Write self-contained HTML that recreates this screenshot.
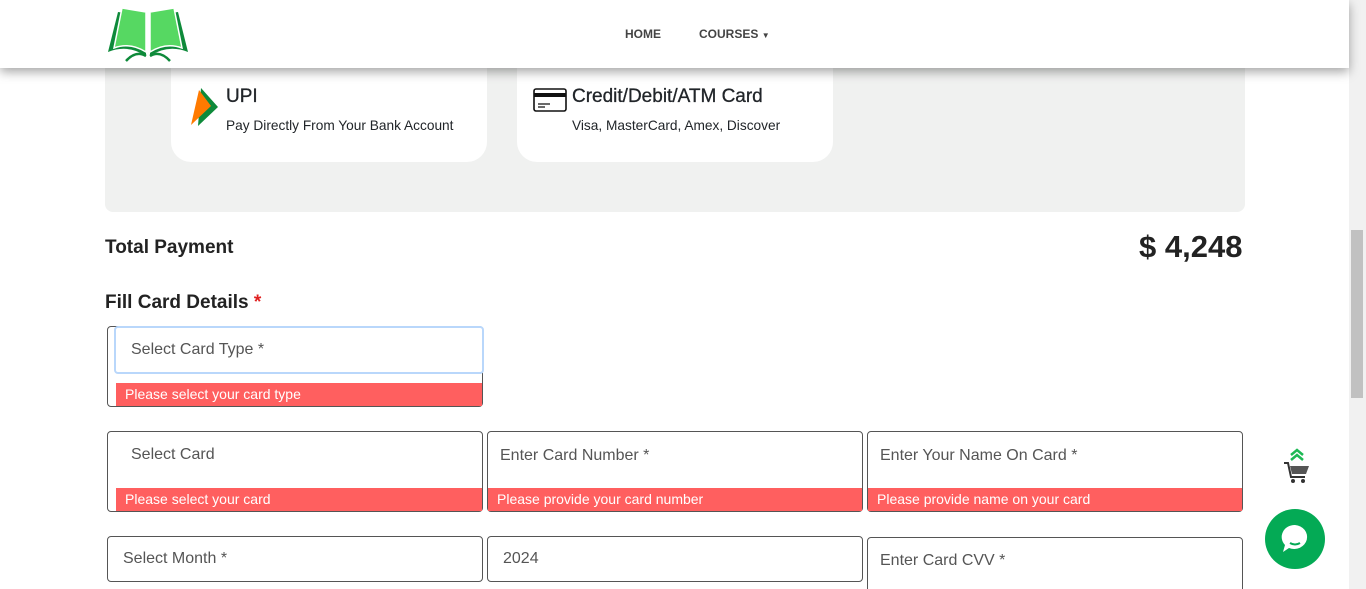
<!DOCTYPE html>
<html><head><style>
*{box-sizing:border-box;margin:0;padding:0}
html,body{width:1366px;height:589px;overflow:hidden}
body{background:#fff;font-family:"Liberation Sans",Arial,sans-serif;position:relative;color:#212529}
.abs{position:absolute}
.hdr{left:0;top:0;width:1349px;height:68px;background:#fff;box-shadow:0 4px 10px rgba(0,0,0,.35);z-index:5}
.nav{font-size:12px;font-weight:bold;color:#444;top:27px}
.panel{left:105px;top:40px;width:1140px;height:172px;background:#f0f1f0;border-radius:8px}
.card{background:#fff;border-radius:20px;top:40px;height:122px}
.box{border:1px solid #555;border-radius:4px;background:#fff}
.err{background:#ff5f5f;color:#fff;font-size:14px;padding-left:9px;line-height:23px;height:23px}
.ph{font-size:16px;color:#555}
.sb{left:1349px;top:0;width:17px;height:589px;background:#f1f1f1}
</style></head><body>
<div class="abs hdr">
<svg class="abs" style="left:106px;top:6px" width="84" height="56" viewBox="0 0 84 56">
<path d="M2 46 L12 6 L40 10 L40 50 Q22 38 2 46Z" fill="#0e8a3a"/>
<path d="M82 46 L72 6 L44 10 L44 50 Q62 38 82 46Z" fill="#0e8a3a"/>
<path d="M8 42 L16 2 L40 6 L40 46 Q24 36 8 42Z" fill="#56d862" stroke="#fff" stroke-width="1.5"/>
<path d="M76 42 L68 2 L44 6 L44 46 Q60 36 76 42Z" fill="#56d862" stroke="#fff" stroke-width="1.5"/>
<path d="M20 55 Q30 44 40 50 M64 55 Q54 44 44 50" stroke="#0e8a3a" stroke-width="2.5" fill="none"/>
</svg>
<div class="abs nav" style="left:625px">HOME</div>
<div class="abs nav" style="left:699px">COURSES <span style="font-size:8px">▼</span></div>
</div>
<div class="abs panel"></div>
<div class="abs card" style="left:171px;width:316px"></div>
<div class="abs card" style="left:517px;width:316px"></div>
<svg class="abs" style="left:191px;top:88px" width="28" height="38" viewBox="0 0 28 38"><path d="M10 0 L27 19 L7 38Z" fill="#0e8a3a"/><path d="M8 2 L20 18 L0 37Z" fill="#ff7a00"/></svg>
<div class="abs" style="left:226px;top:86px;font-size:19px;font-weight:500;-webkit-text-stroke:0.3px #212529">UPI</div>
<div class="abs" style="left:226px;top:118px;font-size:13.7px">Pay Directly From Your Bank Account</div>
<svg class="abs" style="left:533px;top:88px" width="34" height="24" viewBox="0 0 34 24"><rect x="1" y="1" width="32" height="22" rx="2" fill="#fff" stroke="#111" stroke-width="1.6"/><rect x="1" y="5" width="32" height="4" fill="#111"/><path d="M5 16h12M5 19h7" stroke="#111" stroke-width="1.3"/></svg>
<div class="abs" style="left:572px;top:86px;font-size:19px;-webkit-text-stroke:0.3px #212529">Credit/Debit/ATM Card</div>
<div class="abs" style="left:572px;top:118px;font-size:13.7px">Visa, MasterCard, Amex, Discover</div>
<div class="abs" style="left:105px;top:237px;font-size:19px;font-weight:bold;color:#222">Total Payment</div>
<div class="abs" style="left:1139px;top:229px;font-size:31px;font-weight:bold;color:#222">$ 4,248</div>
<div class="abs" style="left:105px;top:292px;font-size:19px;font-weight:bold;color:#222">Fill Card Details <span style="color:#e02020">*</span></div>

<div class="abs box" style="left:107px;top:326px;width:376px;height:81px"></div>
<div class="abs" style="left:114px;top:326px;width:370px;height:48px;border:2px solid #b9d7fb;border-radius:4px;background:#fff"></div>
<div class="abs ph" style="left:131px;top:341px">Select Card Type *</div>
<div class="abs err" style="left:116px;top:383px;width:366px">Please select your card type</div>

<div class="abs box" style="left:107px;top:431px;width:376px;height:81px"></div>
<div class="abs ph" style="left:131px;top:446px">Select Card</div>
<div class="abs err" style="left:116px;top:488px;width:366px">Please select your card</div>
<div class="abs box" style="left:487px;top:431px;width:376px;height:81px"></div>
<div class="abs ph" style="left:500px;top:447px">Enter Card Number *</div>
<div class="abs err" style="left:488px;top:488px;width:374px">Please provide your card number</div>
<div class="abs box" style="left:867px;top:431px;width:376px;height:81px"></div>
<div class="abs ph" style="left:880px;top:447px">Enter Your Name On Card *</div>
<div class="abs err" style="left:868px;top:488px;width:374px">Please provide name on your card</div>

<div class="abs box" style="left:107px;top:536px;width:376px;height:46px"></div>
<div class="abs ph" style="left:123px;top:550px">Select Month *</div>
<div class="abs box" style="left:487px;top:536px;width:376px;height:46px"></div>
<div class="abs ph" style="left:503px;top:550px">2024</div>
<div class="abs box" style="left:867px;top:537px;width:376px;height:70px"></div>
<div class="abs ph" style="left:880px;top:552px">Enter Card CVV *</div>

<svg class="abs" style="left:1283px;top:445px" width="28" height="42" viewBox="0 0 28 42"><path d="M8 10l6-5 6 5M8 15l6-5 6 5" stroke="#1db954" stroke-width="2.5" fill="none"/><path d="M1 18h4l3 14h14" stroke="#333" stroke-width="2" fill="none"/><path d="M7 21h19l-3 8H9Z" fill="#555"/><circle cx="10" cy="36" r="2" fill="#333"/><circle cx="20" cy="36" r="2" fill="#333"/></svg>
<svg class="abs" style="left:1265px;top:509px" width="60" height="60" viewBox="0 0 60 60"><circle cx="30" cy="30" r="30" fill="#04aa55"/><path d="M30 16a13 12 0 1 1-6 23l-6 4 2-7a13 12 0 0 1 10-20Z" fill="#fff"/><path d="M25 34q5 3 10 0" stroke="#04aa55" stroke-width="2" fill="none"/></svg>
<div class="abs sb"><div class="abs" style="left:2px;top:230px;width:12px;height:168px;background:#c1c1c1"></div></div>
</body></html>
